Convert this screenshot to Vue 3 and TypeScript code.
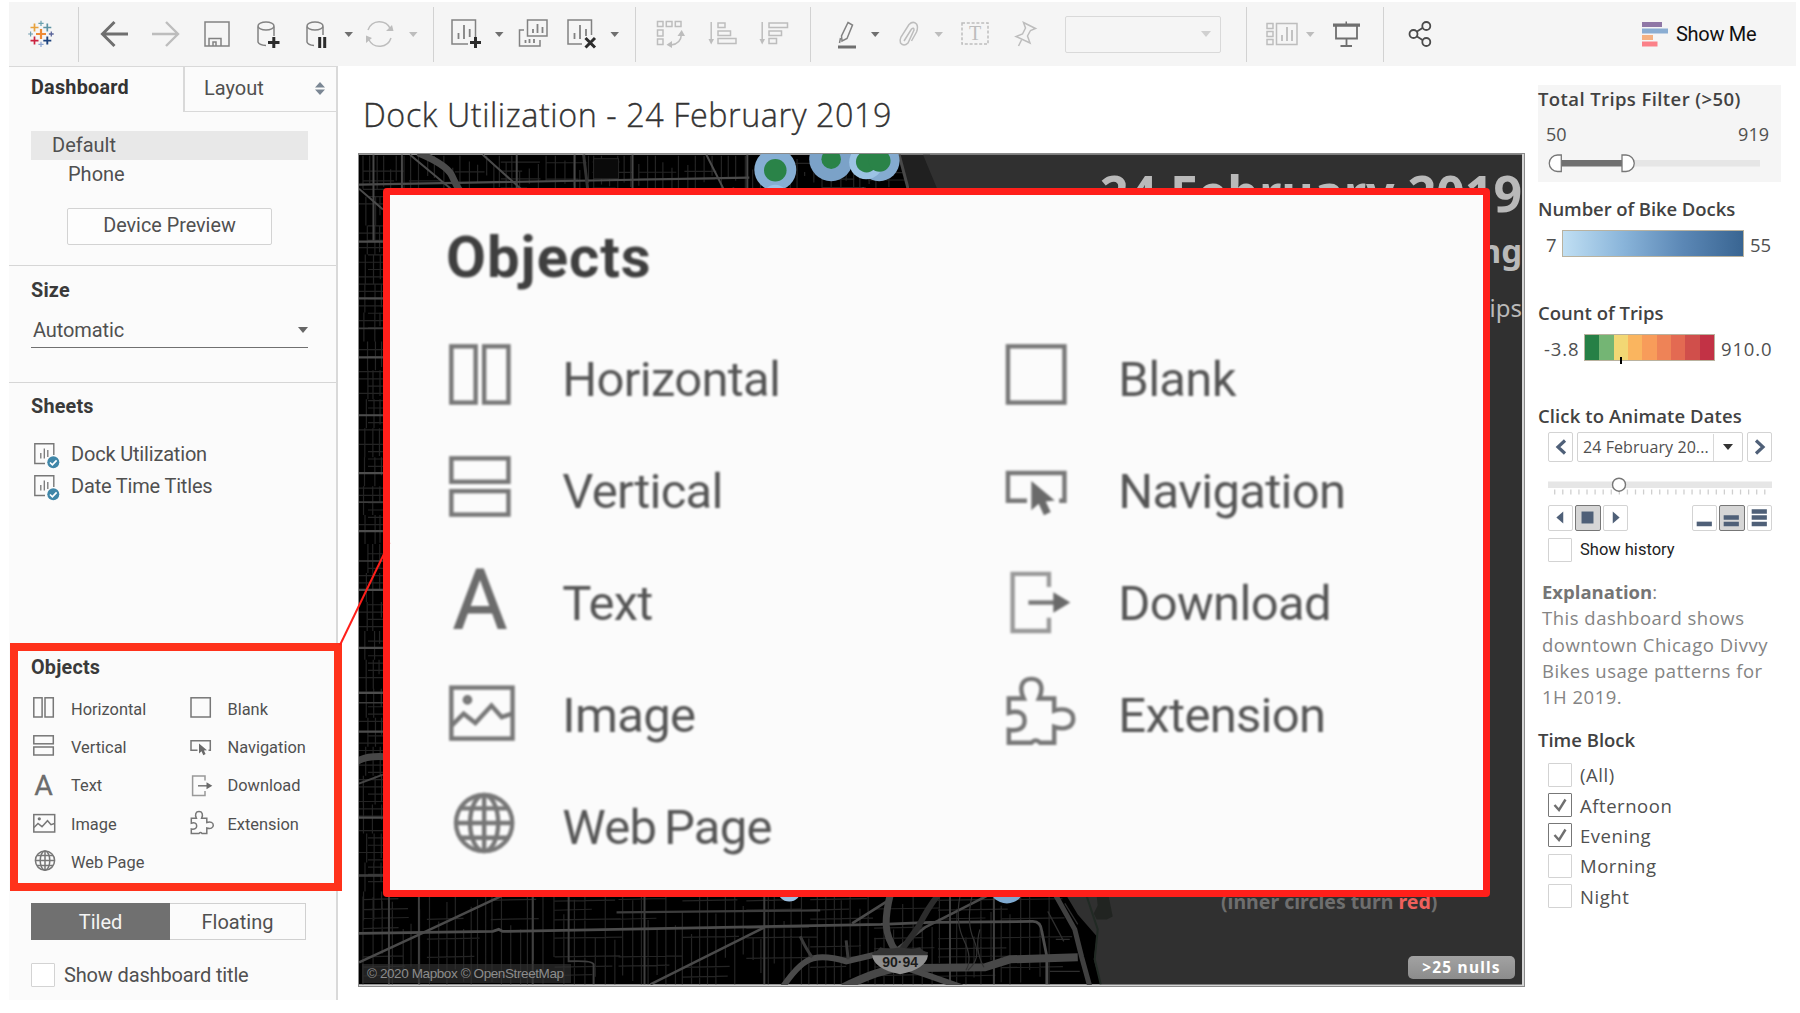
<script setup lang="ts">
interface Plus { x: number; y: number; r: number; w: number; c: string }
interface ObjectItem { icon: string; label: string }
interface Road { d: string; w: number; c: string }

const pluses: Plus[] = [
  { x: 41, y: 34, r: 5, w: 2.2, c: '#ee8a34' },
  { x: 34.5, y: 27.5, r: 4, w: 1.7, c: '#e8a23c' },
  { x: 47.3, y: 27.5, r: 4, w: 1.7, c: '#5d93a3' },
  { x: 34.5, y: 40.6, r: 4, w: 1.7, c: '#cb2340' },
  { x: 47.3, y: 40.6, r: 4, w: 1.9, c: '#1f447e' },
  { x: 41, y: 23.3, r: 2.6, w: 1.2, c: '#6aa0ae' },
  { x: 41, y: 44.4, r: 2.6, w: 1.2, c: '#8aa3cf' },
  { x: 30.6, y: 34, r: 2.4, w: 1.2, c: '#6f9cae' },
  { x: 51.3, y: 34, r: 2.4, w: 1.3, c: '#5b659a' },
]

const leftObjects: ObjectItem[] = [
  { icon: 'horizontal', label: 'Horizontal' },
  { icon: 'vertical', label: 'Vertical' },
  { icon: 'text', label: 'Text' },
  { icon: 'image', label: 'Image' },
  { icon: 'web', label: 'Web Page' },
]
const rightObjects: ObjectItem[] = [
  { icon: 'blank', label: 'Blank' },
  { icon: 'navigation', label: 'Navigation' },
  { icon: 'download', label: 'Download' },
  { icon: 'extension', label: 'Extension' },
]
const objectColumns = [leftObjects, rightObjects]

const sheets = ['Dock Utilization', 'Date Time Titles']
const timeBlocks = [
  { label: '(All)', on: false },
  { label: 'Afternoon', on: true },
  { label: 'Evening', on: true },
  { label: 'Morning', on: false },
  { label: 'Night', on: false },
]
const tripColors = ['#268046', '#74b574', '#f2d774', '#fab55f', '#f89c5a', '#ee8357', '#e36a52', '#d04f4b', '#c23245']
const ticks = Array.from({ length: 27 }, (_, i) => 6.7 + i * 8.08)

/* Minor street grid, generated with a small seeded generator */
let seed = 11
const rnd = () => {
  seed = (seed * 16807) % 2147483647
  return seed / 2147483647
}
const minor: string[] = []
const addGrid = (x0: number, y0: number, x1: number, y1: number, step: number) => {
  for (let x = x0; x < x1; x += step * (0.7 + rnd() * 0.6)) {
    const a = y0 + (rnd() < 0.5 ? 0 : rnd() * (y1 - y0) * 0.5)
    const b = y1 - (rnd() < 0.5 ? 0 : rnd() * (y1 - y0) * 0.4)
    minor.push(`M${x.toFixed(1)} ${a.toFixed(1)}V${b.toFixed(1)}`)
  }
}
addGrid(362, 155, 892, 188, 7.5)
addGrid(362, 897, 1050, 985, 8.5)
for (let y = 160; y < 188; y += 9) {
  for (let x = 362; x < 890; x += 46) {
    if (rnd() < 0.6) minor.push(`M${x} ${y + rnd() * 3}h${20 + rnd() * 28}`)
  }
}
for (let y = 900; y < 984; y += 9.5) {
  for (let x = 362; x < 1040; x += 64) {
    if (rnd() < 0.62) minor.push(`M${x} ${y + rnd() * 2}l${34 + rnd() * 40} -1`)
  }
}
for (let y = 196; y < 896; y += 7.3) {
  if (rnd() < 0.75) minor.push(`M${358 + (rnd() < 0.4 ? 9 : 0)} ${y}H382`)
}
for (let y = 196; y < 896; y += 29) {
  minor.push(`M${362 + rnd() * 5} ${y}v29M${371 + rnd() * 4} ${y}v29M${378 + rnd() * 3} ${y}v${12 + rnd() * 17}`)
}
const minorPath = minor.join('')

const roads: Road[] = [
  { d: 'M358 184L749 177', w: 2.2, c: '#4b4b4b' },
  { d: 'M401 154V188M516 154V188M574 154V188M632 154V188M372.500 154V240M747 154V188', w: 2, c: '#474747' },
  { d: 'M583 154L587 188', w: 3, c: '#333' },
  { d: 'M482 154L520 188M706 154L723 188M358 188L382 209M409 154L450 188', w: 2, c: '#4b4b4b' },
  { d: 'M417 152Q446 164 451 175T459 190', w: 7, c: '#4a4a4a' },
  { d: 'M358 241H382M358 298H382M358 357H382M358 415H382M358 473H382M358 531H382M358 590H382M358 648H382M358 693H382M358 732H382M358 818H382M358 876H382', w: 2.2, c: '#4d4d4d' },
  { d: 'M358 328H382M358 703H382M358 502H382M358 561H382', w: 1.6, c: '#3c3c3c' },
  { d: 'M356 762Q364 756 384 757', w: 7, c: '#474747' },
  { d: 'M358 784L382 775', w: 2, c: '#454545' },
  { d: 'M388 897V985M418 897V985M532 897V985M568 897V962Q592 961 593 965V985M644 897V985M764 897V985M950 897V985M994 897V985', w: 2, c: '#3f3f3f' },
  { d: 'M358 934L492 932L498 930L502 932L881 925L930 923L1033 922Q1041 922 1042 932L1047 957V985', w: 2.8, c: '#4c4c4c' },
  { d: 'M616 913L820 911M358 876H382', w: 2.2, c: '#3c3c3c' },
  { d: 'M358 963L423 933L502 896M650 985L764 928M852 924L890 900M896 950L925 928L988 896', w: 2.6, c: '#4a4a4a' },
  { d: 'M890 896Q886 912 886 925Q887 940 896 952', w: 7, c: '#464646' },
  { d: 'M938 896Q928 908 918 928L902 950', w: 6, c: '#2c2c2c' },
  { d: 'M783 987Q800 962 813 959T846 962L876 955', w: 6, c: '#4a4a4a' },
  { d: 'M800 937Q806 950 812 958M846 941L848 960', w: 3, c: '#3a3a3a' },
  { d: 'M843 988Q876 972 896 969L985 968L1010 960L1078 958', w: 8, c: '#484848' },
  { d: 'M905 968L962 988', w: 6, c: '#4a4a4a' },
  { d: 'M960 897q-5 26 4 44t2 30M972 897q-6 26 2 44t-6 30M980 930q-6 20 4 38', w: 1.2, c: '#333' },
  { d: 'M1056 896L1075 930L1082 958L1090 987', w: 5, c: '#404040' },
  { d: 'M1065 904L1078 925M1048 912l16 30M1056 940h14M1050 972h30', w: 1.3, c: '#2e2e2e' },
]
</script>

<template>
  <div class="page">
    <svg class="defs" width="0" height="0" aria-hidden="true">
      <defs>
        <g id="i-horizontal" class="ln"><rect x=".8" y=".8" width="8.300" height="19.200" /><rect x="12" y=".8" width="8.300" height="19.200" /></g>
        <g id="i-vertical" class="ln"><rect x=".8" y=".8" width="19.500" height="8" /><rect x=".8" y="12" width="19.500" height="8" /></g>
        <g id="i-text"><text x="10.600" y="20.700" text-anchor="middle" class="glyph">A</text></g>
        <g id="i-image" class="ln"><rect x=".8" y="2.600" width="20.900" height="17.400" /><path d="M1 15.500l4-4 4 3.200 5.500-6 3.500 4 3.500-1.200" /><circle cx="6.300" cy="6.800" r=".9" /></g>
        <g id="i-web" class="ln"><circle cx="12" cy="10.600" r="9.600" /><ellipse cx="12" cy="10.600" rx="4.800" ry="9.600" /><path d="M12 1V20.200M2.400 10.600H21.600M3.800 5.600H20.200M3.800 15.600H20.200" /></g>
        <g id="i-blank" class="ln"><rect x="1" y=".8" width="19.300" height="19.200" /></g>
        <g id="i-navigation"><path class="ln" d="M7.500 15.300H1V5.800H20.300V15.300H18.500" /><path d="M9 8.500V18.500L11.500 16.300 13.300 20.200 15.600 19.100 13.900 15.500 17 15.200Z" class="solid" /></g>
        <g id="i-download"><path class="ln dim" d="M15 6.500V2H2.600V21.500H15V17" /><path class="ln" d="M8 11.800H18" /><path class="solid" d="M16.500 8.300L22.300 11.800 16.500 15.300Z" /></g>
        <g id="i-extension" class="ln"><path d="M1.300 6.300H6.400C4.600 2.500 5.800-.4 9-.4S13.400 2.500 11.600 6.300H16.800V10.500C20.500 9.300 23.300 10.600 23.300 13.300S20.500 17.300 16.800 16V21.400H12Q10.500 19.800 9 21.400H1.300V17C4.500 17.600 6.700 16.500 6.700 13.900S4.500 10.200 1.300 11.200Z" /></g>
      </defs>
    </svg>

    <header class="toolbar">
      <div class="group">
        <svg width="69" height="30" viewBox="9 19 69 30">
          <path v-for="(p, i) in pluses" :key="i" :d="`M${p.x - p.r} ${p.y}h${p.r * 2}M${p.x} ${p.y - p.r}v${p.r * 2}`" :stroke="p.c" :stroke-width="p.w" />
        </svg>
      </div>
      <div class="group">
        <svg width="60" height="30" viewBox="79 19 60 30"><path class="dk thick" d="M128 34H103M114.500 22L102.500 34L114.500 46" /></svg>
        <svg width="51" height="30" viewBox="139 19 51 30"><path class="lt thick2" d="M152 34H178M166 22L178 34L166 46" /></svg>
        <svg width="53" height="30" viewBox="190 19 53 30"><path class="md" d="M205 22H229V46H205ZM209 46V38.500H221V46M213 46V42H216V46" /></svg>
        <svg width="50" height="30" viewBox="243 19 50 30"><path class="md" d="M258 26.500V42Q259 45 266 45.500M274 26.500V36" /><ellipse class="md" cx="266" cy="26" rx="8" ry="4" /><path class="bk" d="M268 42.500H279.500M273.800 37V48" /></svg>
        <svg width="65" height="30" viewBox="293 19 65 30"><path class="md" d="M307 26.500V42Q308 45 314 45.500M323 26.500V35" /><ellipse class="md" cx="315" cy="26" rx="8" ry="4" /><path class="bk" d="M319.700 37V48M324.700 37V48" /><path class="cd" d="M344.500 32H353L348.700 37Z" /></svg>
        <svg width="75" height="30" viewBox="358 19 75 30"><path class="lt" d="M368 30A12 12 0 0 1 390.500 29M391 38A12 12 0 0 1 369 40" /><path class="cl" d="M386 31H393.500L392 25ZM366 43V35.500L372 38ZM409 32H417.500L413.200 37Z" /></svg>
      </div>
      <div class="group">
        <svg width="74" height="30" viewBox="434 19 74 30"><path class="md" d="M468 44H452V20H475.500V37" /><path class="md b" d="M458.500 39V33M464 39V25M469.700 37V29" /><path class="bk" d="M470 42.500H481M475.500 37V48" /><path class="cd" d="M495 32H503.500L499.200 37Z" /></svg>
        <svg width="49" height="30" viewBox="508 19 49 30"><path class="md" d="M527.500 20H547V36H527.500ZM524 30H519.500V46H540V40" /><path class="md b" d="M533 33V29M537.500 33V24M542.500 33V27M525.500 43V40M529.500 43V39M534 43V39" /></svg>
        <svg width="78" height="30" viewBox="557 19 78 30"><path class="md" d="M582 44H568V20H591.500V35" /><path class="md b" d="M574.500 39V33M580 39V25M586 36V29" /><path class="bk" d="M585.500 38L595 47.500M595 38L585.500 47.500" /><path class="cd" d="M610.500 32H619L614.700 37Z" /></svg>
      </div>
      <div class="group">
        <svg width="61" height="30" viewBox="636 19 61 30"><path class="lt" d="M657.500 21.500H663V26.500H657.500ZM666.300 21.500H672V26.500H666.300ZM675.300 21.500H681V26.500H675.300ZM657.500 30H663V36H657.500ZM657.500 39H663V44.500H657.500ZM681.500 34Q681 44 671 45" /><path class="cl" d="M677.500 36L681.700 30 685 36ZM672 41V48L666.500 44.800Z" /></svg>
        <svg width="52" height="30" viewBox="697 19 52 30"><path class="lt" d="M711.200 22V41M718 23H725V27.500H718ZM718 31H730.500V35.500H718ZM718 38.500H736V43.500H718Z" /><path class="cl" d="M708.500 39H714L711.200 44.500Z" /></svg>
        <svg width="61" height="30" viewBox="749 19 61 30"><path class="lt" d="M762.200 22V41M769 23H787.500V27.500H769ZM769 31H781.500V35.500H769ZM769 38.500H776.500V43.500H769Z" /><path class="cl" d="M759.500 39H765L762.200 44.500Z" /></svg>
      </div>
      <div class="group">
        <svg width="77" height="30" viewBox="811 19 77 30"><path class="md" d="M848 22.500L852.500 25 847 38.500 842 41 841.500 36ZM840.500 38L839.500 43" /><path d="M838 45.500H856V48.500H838Z" fill="#6f6f6f" /><path class="cd" d="M871 32H879.500L875.200 37Z" /></svg>
        <svg width="63" height="30" viewBox="888 19 63 30"><path class="lt" d="M904 41L911.500 29Q914 27 914 30L908 43Q904 47 900.500 43Q899.500 40 901 37L909 24.500Q913 20.500 916.500 24Q918.500 27 916.500 32L911.500 41" /><path class="cl" d="M934.500 32H943L938.700 37Z" /></svg>
        <svg width="51" height="30" viewBox="951 19 51 30"><rect class="lt" x="962" y="23" width="26" height="21" stroke-dasharray="3 1.800" /><text x="975" y="39.500" text-anchor="middle" class="tee">T</text></svg>
        <svg width="48" height="30" viewBox="1002 19 48 30"><path class="lt" d="M1023.500 22.500L1035.500 28.500 1030.500 30.500 1027.500 36 1030 43 1016 36.500 1022.500 34 1025.500 28ZM1021.500 40L1018.500 46" /></svg>
        <div class="combo"><i class="tri"></i></div>
      </div>
      <div class="group">
        <svg width="76" height="30" viewBox="1247 19 76 30"><path class="lt" d="M1267 23.500H1273V28.500H1267ZM1267 31.500H1273V36.500H1267ZM1267 39.500H1273V44.500H1267ZM1276.500 23.500H1297V44.500H1276.500Z" /><path class="lt b" d="M1282 41V35M1287 41V27M1292 41V30" /><path class="cl" d="M1306 32H1314.500L1310.200 37Z" /></svg>
        <svg width="60" height="30" viewBox="1323 19 60 30"><path d="M1333 23.500H1360V26.800H1333ZM1345.500 21.500h1.500v3h-1.500Z" fill="#6f6f6f" /><path class="dk s" d="M1336 26V38.500H1357V26M1346.500 38.500V46M1340.500 46H1352" /></svg>
      </div>
      <div class="group last">
        <svg width="76" height="30" viewBox="1384 19 76 30"><path d="M1417 31.500L1422.500 28M1417 36.500L1422.500 40" class="sh" /><circle class="sh" cx="1413.500" cy="34" r="4" /><circle class="sh" cx="1426.300" cy="26" r="4" /><circle class="sh" cx="1426.300" cy="42" r="4" /></svg>
        <div class="showme">
          <svg width="27" height="25" viewBox="0 0 27 25"><path fill="#8f77a6" d="M0 0H20V5H0Z" /><path fill="#8aadd2" d="M0 6.500H26V11.500H0Z" /><path fill="#f4b183" d="M0 13H11V18H0Z" /><path fill="#fb8088" d="M0 19.500H15.500V24.500H0Z" /></svg>
          <span>Show Me</span>
        </div>
      </div>
    </header>

    <div class="body">
      <aside class="sidebar">
        <div class="tabs">
          <div class="tab on">Dashboard</div>
          <div class="tab off"><span>Layout</span>
            <svg width="10" height="13" viewBox="0 0 10 13"><path fill="#7b8794" d="M0 5.500L5 0 10 5.500ZM0 7.500H10L5 13Z" /></svg>
          </div>
        </div>
        <div class="devices">
          <div class="dev sel">Default</div>
          <div class="dev sub">Phone</div>
          <button class="preview">Device Preview</button>
        </div>
        <div class="size">
          <h3>Size</h3>
          <div class="select"><span>Automatic</span><i class="tri"></i></div>
        </div>
        <div class="sheets">
          <h3>Sheets</h3>
          <div v-for="s in sheets" :key="s" class="sheet">
            <svg width="26" height="26" viewBox="0 0 26 26">
              <path d="M11 20.500H.8V.8H19.800V12" fill="none" stroke="#777" stroke-width="1.400" />
              <path d="M6.800 15.500V10M10.300 15.500V5.500M13.800 14V7" stroke="#777" stroke-width="1.300" />
              <circle cx="19.300" cy="19.300" r="6" fill="#3f86a8" />
              <path d="M16 19.500l2.400 2.300 4.200-4.400" fill="none" stroke="#fff" stroke-width="1.700" />
            </svg>
            <span>{{ s }}</span>
          </div>
        </div>
        <div class="objects">
          <h3>Objects</h3>
          <div class="cols">
            <div v-for="(col, c) in objectColumns" :key="c" class="col">
              <div v-for="o in col" :key="o.label" class="obj">
                <svg class="oi" viewBox="0 0 24 24"><use :href="`#i-${o.icon}`" /></svg>
                <span>{{ o.label }}</span>
              </div>
            </div>
          </div>
          <div class="highlight"></div>
        </div>
        <div class="modes"><div class="mode on">Tiled</div><div class="mode">Floating</div></div>
        <div class="titlecheck"><i class="box"></i><span>Show dashboard title</span></div>
      </aside>

      <main class="main">
        <h1>Dock Utilization - 24 February 2019</h1>
        <div class="map">
          <svg class="mapsvg" width="1165" height="831" viewBox="358 154 1165 831">
            <rect x="358" y="154" width="1165" height="831" fill="#000" />
            <path :d="minorPath" stroke="#242424" stroke-width="1.200" fill="none" />
            <rect x="593" y="158" width="25" height="20" fill="#0a0a0a" stroke="#262626" />
            <path v-for="(r, i) in roads" :key="i" :d="r.d" :stroke="r.c" :stroke-width="r.w" fill="none" />
            <path d="M898 154L905 180L912 190H945L930 154Z" fill="#202020" />
            <path d="M899 154L908 188" stroke="#484848" stroke-width="3" />
            <path d="M923 154L938 190L1063 890L1078 915L1097 937L1094 960L1101 985H1523V154Z" fill="#303030" />
            <path d="M1097 897h12l4 20l-6 3h-10l-3 -6l4 -8Z" fill="#212421" />
            <path d="M1087 897L1098 930L1095 960L1101 985" stroke="#212a24" stroke-width="2" fill="none" />
            <circle cx="733" cy="197" r="10" fill="#8fb2d4" /><circle cx="863" cy="197" r="10" fill="#8fb2d4" />
            <circle cx="775" cy="169" r="21" fill="#86aed3" /><circle cx="775" cy="197" r="13" fill="#9cc3e6" />
            <circle cx="831" cy="158.500" r="22" fill="#7ba2c8" /><circle cx="879" cy="160" r="20.500" fill="#84abd0" />
            <circle cx="866" cy="161.500" r="17" fill="#9cc3e4" />
            <circle cx="775" cy="169.500" r="11.300" fill="#2a8348" /><circle cx="831" cy="158.500" r="9.800" fill="#2a8348" />
            <circle cx="866.500" cy="161" r="10.700" fill="#2a8348" /><circle cx="879.500" cy="160" r="11" fill="#2a8348" />
            <circle cx="789" cy="890" r="12" fill="#9bbfe0" /><circle cx="1007" cy="886" r="18" fill="#7fa9d0" />
            <path d="M872 953q6-1 8-5q8 3 20 0q12 3 20 0q2 4 8 5l-1 5H873Z" fill="#333" />
            <path d="M872 956H928Q926 970 900 975Q874 970 872 956Z" fill="#8e8e8e" />
            <text x="900" y="968" text-anchor="middle" class="shield">90·94</text>
          </svg>
          <div class="maptext">
            <div class="m1">24 February 2019</div>
            <div class="m2">Evening</div>
            <div class="m3">Trips</div>
          </div>
          <div class="inner">(inner circles turn <em>red</em>)</div>
          <div class="nulls">&gt;25 nulls</div>
          <div class="attr">© 2020 Mapbox © OpenStreetMap</div>
        </div>
      </main>

      <section class="filters">
        <div class="trips">
          <h4>Total Trips Filter (&gt;50)</h4>
          <div class="range"><span>50</span><span>919</span></div>
          <svg width="243" height="20" viewBox="0 0 243 20">
            <path fill="#e6e6e6" d="M95 7H222V13.500H95Z" /><path fill="#707070" d="M23 7H84V13.500H23Z" />
            <path fill="#fff" stroke="#777" stroke-width="1.300" d="M23.300 2V18.500H19.500A8.200 8.200 0 0 1 19.500 2ZM84 2V18.500H88A8.200 8.200 0 0 0 88 2Z" />
          </svg>
        </div>
        <h4 class="h-docks">Number of Bike Docks</h4>
        <div class="legend l1"><span class="a">7</span><div class="ramp"></div><span>55</span></div>
        <h4 class="h-count">Count of Trips</h4>
        <div class="legend l2"><span class="a">-3.8</span>
          <div class="steps"><i v-for="c in tripColors" :key="c" :style="{ background: c }"></i><b></b></div>
          <span>910.0</span></div>
        <h4 class="h-anim">Click to Animate Dates</h4>
        <div class="pager">
          <div class="pbtn"><svg width="12" height="16" viewBox="0 0 12 16"><path d="M10 1.500L3 8L10 14.500" /></svg></div>
          <div class="date"><span>24 February 20...</span><div><i class="tri"></i></div></div>
          <div class="pbtn"><svg width="12" height="16" viewBox="0 0 12 16"><path d="M2 1.500L9 8L2 14.500" /></svg></div>
        </div>
        <svg class="scrub" width="224" height="20" viewBox="0 0 224 20">
          <path fill="#e6e6e6" d="M0 4.500H224V11H0Z" />
          <path v-for="t in ticks" :key="t" :d="`M${t} 12.500v5`" stroke="#cfcfcf" stroke-width="1.300" />
          <circle cx="71" cy="7.700" r="6.500" fill="#fff" stroke="#777" stroke-width="1.400" />
        </svg>
        <div class="play">
          <div class="sb"><svg viewBox="0 0 25 25"><path d="M8 12.500L15.500 6V19Z" /></svg></div>
          <div class="sb act"><svg viewBox="0 0 25 25"><path d="M6 6H19V19H6Z" /></svg></div>
          <div class="sb"><svg viewBox="0 0 25 25"><path d="M17 12.500L9.500 6V19Z" /></svg></div>
          <div class="sb first"><svg viewBox="0 0 25 25"><path d="M4 17H20.500V22H4Z" /></svg></div>
          <div class="sb act"><svg viewBox="0 0 25 25"><path d="M4 10H20.500V15H4ZM4 17H20.500V22H4Z" /></svg></div>
          <div class="sb"><svg viewBox="0 0 25 25"><path d="M4 3.500H20.500V8.500H4ZM4 10H20.500V15H4ZM4 17H20.500V22H4Z" /></svg></div>
        </div>
        <div class="history"><i class="box"></i><span>Show history</span></div>
        <p class="explain"><b>Explanation</b>:<br />This dashboard shows<br />downtown Chicago Divvy<br />Bikes usage patterns for<br />1H 2019.</p>
        <h4 class="h-time">Time Block</h4>
        <div v-for="t in timeBlocks" :key="t.label" class="check">
          <i class="box" :class="{ on: t.on }"><svg v-if="t.on" width="14" height="14" viewBox="0 0 14 14"><path d="M1.500 7L6 12L12.500 1.500" fill="none" stroke="#6f6f6f" stroke-width="2.400" /></svg></i>
          <span>{{ t.label }}</span>
        </div>
      </section>
    </div>

    <div class="modal">
      <div class="soft">
        <h2>Objects</h2>
        <div class="cols">
          <div v-for="(col, c) in objectColumns" :key="c" class="col">
            <div v-for="o in col" :key="o.label" class="obj">
              <svg class="oi" viewBox="0 0 24 24"><use :href="`#i-${o.icon}`" /></svg>
              <span>{{ o.label }}</span>
            </div>
          </div>
        </div>
      </div>
    </div>

    <svg class="connector" width="60" height="110" viewBox="335 540 60 110"><path d="M340 645L389.500 542.500" stroke="#ff1f1a" stroke-width="2" /></svg>
  </div>
</template>

<style>
html, body { margin: 0; background: #fff; overflow: hidden; }
</style>

<style scoped>
* { box-sizing: border-box; }
.page { position: relative; width: 1800px; height: 1013px; padding: 2px 0 0 9px; background: #fff; font-family: Roboto, sans-serif; font-size: 20px; color: #505050; overflow: hidden; white-space: nowrap; }
.defs { position: absolute; }
svg { display: block; flex: none; }
h1, h2, h3, h4, p { margin: 0; }
i { font-style: normal; display: block; }
.ln { fill: none; stroke: #777; stroke-width: 1.5; }
.dim { stroke: #999; }
.solid { fill: #6a6a6a; }
.glyph { font: 400 28.500px Roboto, sans-serif; fill: #6c6c6c; stroke: #6c6c6c; stroke-width: .3px; }

.toolbar { display: flex; align-items: center; width: 1787px; height: 64px; background: #f5f5f5; }
.group { display: flex; align-items: center; height: 55px; border-right: 1px solid #d2d2d2; }
.group.last { border: 0; }
.dk, .md, .lt, .bk, .sh { fill: none; }
.dk { stroke: #6f6f6f; }
.dk.thick { stroke-width: 3; }
.dk.s { stroke-width: 1.8; }
.md { stroke: #828282; stroke-width: 1.5; }
.lt { stroke: #bdbdbd; stroke-width: 1.5; }
.b { stroke-width: 1.8; }
.lt.thick2 { stroke-width: 2.4; }
.bk { stroke: #2c2c2c; stroke-width: 3; }
.sh { stroke: #4a4a4a; stroke-width: 1.8; }
.cd { fill: #6f6f6f; }
.cl { fill: #bdbdbd; }
.tee { font: 20px "Liberation Serif", serif; fill: #bdbdbd; }
.combo { display: flex; align-items: center; justify-content: flex-end; width: 156px; height: 37px; margin: 0 25px 0 15px; padding-right: 9px; border: 1.500px solid #d9d9d9; border-radius: 2px; }
.tri { width: 0; height: 0; border: 5px solid transparent; border-top: 6px solid #666; border-bottom: 0; }
.combo .tri { border-top-color: #d0d0d0; }
.showme { display: flex; align-items: center; gap: 7px; margin-left: 182px; color: #111; letter-spacing: -.3px; }

.body { display: flex; height: 934px; }
.sidebar { width: 329px; height: 934px; background: #fbfbfb; border-top: 1.500px solid #d9d9d9; border-right: 2px solid #d9d9d9; }
h3 { font-size: 19.800px; line-height: 24px; font-weight: 700; letter-spacing: .2px; color: #3a3a3a; }
.tabs { display: flex; height: 45px; }
.tab.on { width: 174px; padding-left: 22px; line-height: 42px; font-size: 19.800px; font-weight: 700; letter-spacing: .25px; color: #333; }
.tab.off { display: flex; align-items: center; flex: 1; padding: 0 11px 2px 19px; border-left: 2px solid #d9d9d9; border-bottom: 1.500px solid #d9d9d9; }
.tab.off svg { margin-left: auto; }
.devices { height: 154px; padding-top: 19px; border-bottom: 1.500px solid #d6d6d6; }
.dev { line-height: 29px; height: 29px; }
.dev.sel { width: 277px; margin-left: 22px; padding-left: 21px; background: #e8e8e8; }
.dev.sub { padding-left: 59px; line-height: 28px; }
.preview { display: block; width: 205px; height: 37px; margin: 19px 0 0 58px; border: 1.500px solid #d3d3d3; border-radius: 2px; background: #fdfdfd; font: 19.800px/32px Roboto, sans-serif; padding: 0 0 2px; color: #505050; }
.size { height: 117px; padding: 13px 0 0 22px; border-bottom: 1.500px solid #d6d6d6; }
.select { display: flex; align-items: center; justify-content: space-between; width: 277px; height: 36px; margin-top: 9px; padding-left: 2px; border-bottom: 1.500px solid #707070; letter-spacing: -.1px; }
.sheets { height: 259px; padding: 12px 0 0 22px; }
.sheet { display: flex; align-items: center; gap: 11px; height: 32px; padding-left: 3px; letter-spacing: -.18px; }
.sheets h3 { margin-bottom: 19px; }
.sheet svg { margin-top: 4px; }
.sheet span { line-height: 32px; }
.objects { position: relative; height: 261px; padding: 14px 0 0 22px; }
.objects .cols { display: flex; margin-top: 10px; }
.objects .col { flex: none; width: 157.500px; padding-left: 2px; }
.objects .col + .col { padding-left: 1px; }
.objects .obj { display: flex; align-items: center; gap: 14px; height: 38.300px; font-size: 16.400px; }
.objects .oi { width: 24px; height: 24px; overflow: visible; }
.highlight { position: absolute; left: 1px; top: 1px; width: 332px; height: 248px; border: 8px solid #ff321b; }
.modes { display: flex; width: 275px; height: 37px; margin-left: 22px; border: 1.500px solid #d0d0d0; line-height: 36px; text-align: center; }
.mode { flex: 1; }
.mode.on { flex: none; width: 139px; margin: -1px 0 -1px -1px; background: #707070; color: #f4f4f4; line-height: 38px; }
.titlecheck { display: flex; align-items: center; gap: 9px; margin: 22px 0 0 22px; letter-spacing: -.15px; }
.titlecheck span { padding-top: 1px; }
.box { display: flex; align-items: center; justify-content: center; flex: none; width: 24px; height: 24px; border: 1.500px solid #d3d3d3; border-radius: 1px; background: #fff; }
.box.on { border-color: #777; }

.main { width: 1188px; padding: 23px 0 0 20px; }
h1 { height: 50px; padding-left: 5px; font: 300 32.300px/50px "Open Sans", sans-serif; letter-spacing: .57px; color: #333; -webkit-text-stroke: .35px #333; margin-bottom: 14px; }
.map { position: relative; width: 1167px; height: 834px; border: solid #8a8a8a; border-width: 1px 1px 1.500px 1px; background: #d5d5d5; }
.mapsvg { width: 1163px; }
.maptext { position: absolute; right: 2px; top: 1px; text-align: right; font-family: "Noto Sans", sans-serif; color: #b9b9b9; }
.m1 { font-size: 50px; line-height: 76px; font-weight: 700; }
.m2 { font-size: 33px; line-height: 40px; font-weight: 700; }
.m3 { font-size: 24px; line-height: 36px; margin-top: 19px; }
.inner { position: absolute; left: 862px; top: 733px; font: 700 19.500px/30px "Noto Sans", sans-serif; color: #6e6e6e; }
.inner em { font-style: normal; color: #ee605c; }
.nulls { position: absolute; right: 9px; bottom: 7px; width: 107px; height: 23px; border-radius: 5px; background: linear-gradient(#a2a2a2, #8c8c8c); color: #fff; font: 700 15.500px/22px "Noto Sans", sans-serif; text-align: center; letter-spacing: 1.2px; }
.attr { position: absolute; left: 3px; bottom: 3px; width: 209px; height: 19px; background: rgba(50, 50, 50, .65); padding-left: 5px; font: 13.500px/19px "Liberation Sans", sans-serif; letter-spacing: -.4px; color: #8c8c8c; }
.shield { font: 700 14px "Liberation Sans", sans-serif; fill: #1c1c1c; }

.filters { width: 262px; padding: 19px 0 0 12px; font-family: "Open Sans", sans-serif; font-size: 18.500px; }
h4 { font: 600 18.500px/26px "Open Sans", sans-serif; color: #424242; }
.trips { width: 243px; height: 97px; padding-top: 1px; background: #f5f5f5; }
.trips h4 { letter-spacing: .4px; }
.range { display: flex; justify-content: space-between; padding: 0 12px 0 8px; margin-top: 8px; line-height: 28px; font-size: 18px; }
.trips svg { margin-top: 5px; }
.h-docks { margin-top: 14px; letter-spacing: -.08px; }
.legend { display: flex; align-items: center; line-height: 28px; height: 27px; }
.legend span { padding-top: 2px; }
.legend span:last-child { margin-left: 6px; }
.l1 { margin-top: 8px; }
.l1 .a { width: 24px; padding-left: 8px; }
.ramp { width: 182px; height: 27px; border: 1.500px solid #b9b29f; background: linear-gradient(90deg, #c0dff3, #8ab5da 33%, #5c88b6 66%, #396592); }
.h-count { margin-top: 43px; }
.l2 { margin-top: 8px; letter-spacing: .85px; }
.l2 .a { width: 46px; padding-left: 6px; }
.steps { position: relative; display: flex; width: 131px; height: 27px; border: 1.500px solid #b9b29f; }
.steps i { flex: 1; }
.steps b { position: absolute; left: 35px; top: 22px; width: 2px; height: 7px; background: #000; }
.h-anim { margin-top: 42px; letter-spacing: .1px; }
.pager { display: flex; gap: 4px; margin: 3px 0 0 10px; }
.pbtn, .date { display: flex; align-items: center; justify-content: center; height: 30px; border: 1.500px solid #d3d3d3; border-radius: 2px; background: #fff; }
.pbtn { width: 25px; }
.pbtn path { fill: none; stroke: #4f6078; stroke-width: 3.2; }
.date { width: 166px; font-size: 16px; letter-spacing: .08px; }
.date span { flex: 1; padding-left: 5px; line-height: 27px; }
.date div { display: flex; align-items: center; justify-content: center; width: 29px; height: 27px; border-left: 1px solid #d8d8d8; }
.date .tri { border-top-color: #333; }
.scrub { margin: 15px 0 0 10px; }
.play { display: flex; gap: 2px; margin: 8px 0 0 10px; width: 224px; }
.sb { width: 25.300px; height: 25.500px; border: 1.500px solid #d3d3d3; border-radius: 2px; }
.sb svg { width: 23px; height: 23px; }
.sb path { fill: #4f6078; }
.sb.act { border-color: #777; background: #d6d6d6; }
.sb.first { margin-left: auto; }
.history { display: flex; gap: 8px; align-items: center; margin: 6.500px 0 0 10px; font: 16.500px/25px Roboto, sans-serif; color: #222; }
.explain { margin: 17px 0 0 4px; font-size: 18.500px; line-height: 26.300px; color: #848484; letter-spacing: .5px; }
.explain b { color: #757575; letter-spacing: 0; }
.h-time { margin-top: 17px; }
.check { display: flex; align-items: center; gap: 8px; height: 30.400px; margin-left: 10px; letter-spacing: .55px; }
.h-time + .check { margin-top: 6px; }

.connector { position: absolute; left: 335px; top: 540px; }
.modal { position: absolute; left: 383px; top: 188px; width: 1107px; height: 709px; border: 7px solid #ff1f1a; border-radius: 4px; background: #fbfbfb; color: #555; }
.soft { filter: blur(.8px); padding: 27px 0 0 59px; }
h2 { height: 70px; margin-left: -3px; font: 700 58px/70px Roboto, sans-serif; letter-spacing: 1px; color: #3f3f3f; }
.modal .cols { display: flex; margin-top: 31.500px; }
.modal .col { width: 556px; flex: none; }
.modal .obj { display: flex; align-items: center; gap: 43px; height: 112px; }
.modal .oi { width: 70.300px; height: 70.300px; overflow: visible; }
.modal .obj span { font-size: 49px; letter-spacing: -.7px; word-spacing: -4px; }
</style>
